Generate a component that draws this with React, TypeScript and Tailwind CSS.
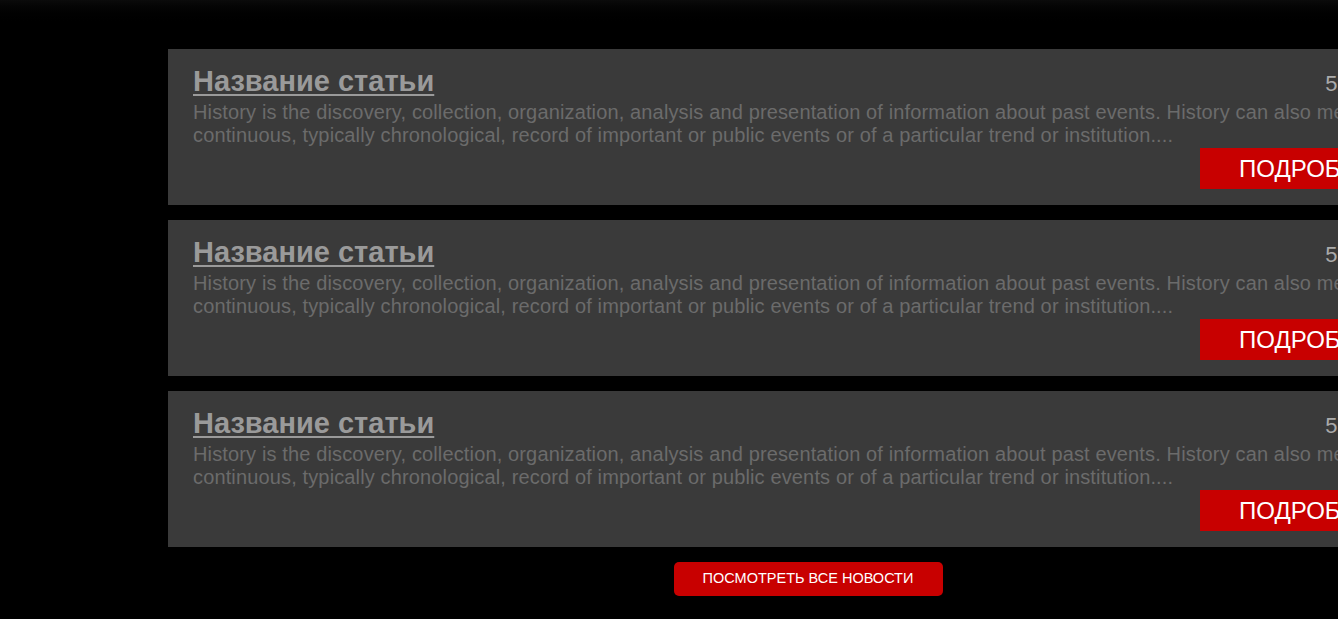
import React from "react";

const text =
  "History is the discovery, collection, organization, analysis and presentation of information about past events. History can also mean a continuous, typically chronological, record of important or public events or of a particular trend or institution....";

const articles = [
  { title: "Название статьи", date: "5.03.2019" },
  { title: "Название статьи", date: "5.03.2019" },
  { title: "Название статьи", date: "5.03.2019" },
];

const NewsCard: React.FC<{ title: string; date: string }> = ({ title, date }) => (
  <div className="bg-[#3a3a3a] w-[1280px] h-[156px] px-[25px] pt-[16px] flex flex-col">
    <div className="flex items-end justify-between">
      <a href="#" className="text-[29px] leading-[32px] font-bold text-[#9a9a9a] underline decoration-2 underline-offset-[3px]">
        {title}
      </a>
      <span className="text-[22px] leading-[26px] text-[#aaaaaa]">{date}</span>
    </div>
    <p className="mt-[4px] text-[20px] leading-[23px] tracking-[0.14px] text-[#6b6b6b]">{text}</p>
    <div className="flex justify-end mt-[1px]">
      <button className="h-[41px] w-[223px] pl-[39px] text-left bg-[#c80000] text-white text-[24px] leading-none">
        ПОДРОБНЕЕ
      </button>
    </div>
  </div>
);

export default function App() {
  return (
    <div className="w-[1338px] h-[619px] overflow-hidden bg-black font-['Liberation_Sans',Arial,sans-serif]">
      <div className="h-[26px] bg-gradient-to-b from-[#0b0b0b] to-black" />
      <div className="ml-[168px] w-[1280px] pt-[23px] flex flex-col">
        <div className="flex flex-col gap-[15px]">
          {articles.map((a, i) => (
            <NewsCard key={i} title={a.title} date={a.date} />
          ))}
        </div>
        <div className="flex justify-center pt-[15px]">
          <button className="w-[269px] h-[34px] rounded-[5px] bg-[#c80000] text-white text-[14.5px]">
            ПОСМОТРЕТЬ ВСЕ НОВОСТИ
          </button>
        </div>
      </div>
    </div>
  );
}
